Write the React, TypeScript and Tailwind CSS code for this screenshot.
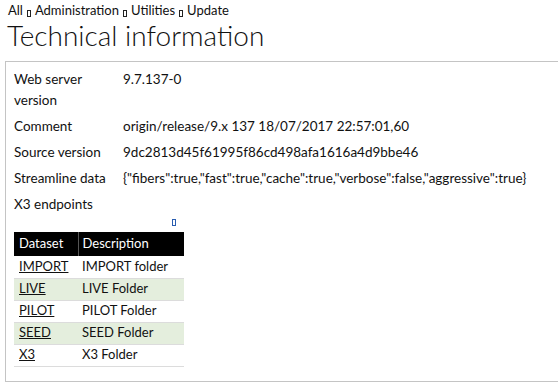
import React from 'react';

const rows = [
  { label: 'Web server version', value: '9.7.137-0' },
  { label: 'Comment', value: 'origin/release/9.x 137 18/07/2017 22:57:01,60' },
  { label: 'Source version', value: '9dc2813d45f61995f86cd498afa1616a4d9bbe46' },
  {
    label: 'Streamline data',
    value: '{"fibers":true,"fast":true,"cache":true,"verbose":false,"aggressive":true}',
  },
];

const endpoints = [
  { dataset: 'IMPORT', description: 'IMPORT folder' },
  { dataset: 'LIVE', description: 'LIVE Folder' },
  { dataset: 'PILOT', description: 'PILOT Folder' },
  { dataset: 'SEED', description: 'SEED Folder' },
  { dataset: 'X3', description: 'X3 Folder' },
];

const Tofu = () => (
  <span className="inline-block w-[4px] h-[7px] border border-[#222] mx-[4px] translate-y-[3px]" />
);

export default function App() {
  return (
    <div className="w-[558px] h-[385px] bg-white overflow-hidden font-['Lato','Noto_Sans',sans-serif] text-[#111]">
      <div className="pl-[8px] pt-[3px] text-[13px] leading-[15px] flex items-center">
        <span>All</span>
        <Tofu />
        <span>Administration</span>
        <Tofu />
        <span>Utilities</span>
        <Tofu />
        <span>Update</span>
      </div>
      <h1 className="pl-[7px] text-[28px] leading-[34px] font-light">Technical information</h1>
      <div className="ml-[5px] mt-[9px] w-[600px] h-[321px] border border-[#c4c4c4] pl-[8px] pt-[6px] text-[13.5px]">
        <div className="flex flex-col">
          {rows.map((r) => (
            <div key={r.label} className="flex leading-[26px]">
              <div className={r.label === 'Web server version' ? 'w-[109px] pr-[20px] leading-[21px] pt-[1px] pb-[2px]' : 'w-[109px] whitespace-nowrap'}>
                {r.label}
              </div>
              <div className={r.label === 'Web server version' ? 'leading-[21px] pt-[1px]' : 'whitespace-nowrap'}>{r.value}</div>
            </div>
          ))}
          <div className="leading-[26px]">X3 endpoints</div>
        </div>
        <div className="w-[170px] flex justify-end pr-[8px] h-[15px]">
          <span className="inline-block w-[4px] h-[7px] border border-[#2a5db0] mt-[2px]" />
        </div>
        <table className="w-[170px] border-collapse text-[13px]">
          <thead>
            <tr className="bg-black text-white h-[24px]">
              <th className="w-[64px] text-left font-normal pl-[5px] border-r border-[#555]">Dataset</th>
              <th className="text-left font-normal pl-[4px]">Description</th>
            </tr>
          </thead>
          <tbody>
            {endpoints.map((e, i) => (
              <tr key={e.dataset} className={`h-[22px] border-b border-[#dcdcdc] ${i % 2 === 1 ? 'bg-[#e4eedd]' : 'bg-white'}`}>
                <td className="pl-[5px] underline">{e.dataset}</td>
                <td className="pl-[4px]">{e.description}</td>
              </tr>
            ))}
          </tbody>
        </table>
      </div>
    </div>
  );
}
